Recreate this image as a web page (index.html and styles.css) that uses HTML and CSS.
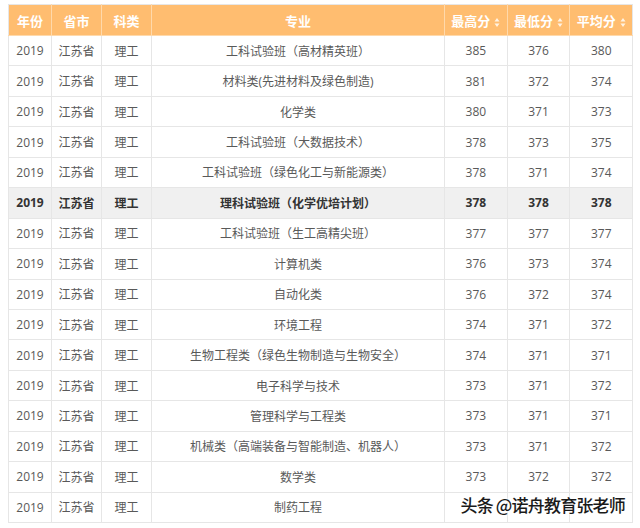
FILE: index.html
```html
<!DOCTYPE html>
<html lang="zh-CN">
<head>
<meta charset="utf-8">
<title>分数表</title>
<link rel="stylesheet" href="styles.css">
</head>
<body>
<div class="wrap">
<table class="score">
  <colgroup>
    <col class="c-year"><col class="c-prov"><col class="c-type"><col class="c-major"><col class="c-num"><col class="c-num"><col class="c-num">
  </colgroup>
  <thead>
    <tr>
      <th>年份</th><th>省市</th><th>科类</th><th>专业</th>
      <th>最高分<svg class="sort" viewBox="0 0 6 9" width="6" height="9"><path d="M3 0L5.5 3.5H0.5Z M3 9L5.5 5.5H0.5Z"/></svg></th>
      <th>最低分<svg class="sort" viewBox="0 0 6 9" width="6" height="9"><path d="M3 0L5.5 3.5H0.5Z M3 9L5.5 5.5H0.5Z"/></svg></th>
      <th>平均分<svg class="sort" viewBox="0 0 6 9" width="6" height="9"><path d="M3 0L5.5 3.5H0.5Z M3 9L5.5 5.5H0.5Z"/></svg></th>
    </tr>
  </thead>
  <tbody>
    <tr><td>2019</td><td>江苏省</td><td>理工</td><td>工科试验班（高材精英班）</td><td>385</td><td>376</td><td>380</td></tr>
    <tr><td>2019</td><td>江苏省</td><td>理工</td><td>材料类(先进材料及绿色制造)</td><td>381</td><td>372</td><td>374</td></tr>
    <tr><td>2019</td><td>江苏省</td><td>理工</td><td>化学类</td><td>380</td><td>371</td><td>373</td></tr>
    <tr><td>2019</td><td>江苏省</td><td>理工</td><td>工科试验班（大数据技术）</td><td>378</td><td>373</td><td>375</td></tr>
    <tr><td>2019</td><td>江苏省</td><td>理工</td><td>工科试验班（绿色化工与新能源类）</td><td>378</td><td>371</td><td>374</td></tr>
    <tr class="hl"><td>2019</td><td>江苏省</td><td>理工</td><td>理科试验班（化学优培计划）</td><td>378</td><td>378</td><td>378</td></tr>
    <tr><td>2019</td><td>江苏省</td><td>理工</td><td>工科试验班（生工高精尖班）</td><td>377</td><td>377</td><td>377</td></tr>
    <tr><td>2019</td><td>江苏省</td><td>理工</td><td>计算机类</td><td>376</td><td>373</td><td>374</td></tr>
    <tr><td>2019</td><td>江苏省</td><td>理工</td><td>自动化类</td><td>376</td><td>372</td><td>374</td></tr>
    <tr><td>2019</td><td>江苏省</td><td>理工</td><td>环境工程</td><td>374</td><td>371</td><td>372</td></tr>
    <tr><td>2019</td><td>江苏省</td><td>理工</td><td>生物工程类（绿色生物制造与生物安全）</td><td>374</td><td>371</td><td>371</td></tr>
    <tr><td>2019</td><td>江苏省</td><td>理工</td><td>电子科学与技术</td><td>373</td><td>371</td><td>372</td></tr>
    <tr><td>2019</td><td>江苏省</td><td>理工</td><td>管理科学与工程类</td><td>373</td><td>371</td><td>371</td></tr>
    <tr><td>2019</td><td>江苏省</td><td>理工</td><td>机械类（高端装备与智能制造、机器人）</td><td>373</td><td>371</td><td>372</td></tr>
    <tr><td>2019</td><td>江苏省</td><td>理工</td><td>数学类</td><td>373</td><td>372</td><td>372</td></tr>
    <tr><td>2019</td><td>江苏省</td><td>理工</td><td>制药工程</td><td></td><td></td><td></td></tr>
  </tbody>
</table>
<div class="mark">头条 @诺舟教育张老师</div>
</div>
</body>
</html>
```

FILE: styles.css
```css
html, body {
  margin: 0;
  padding: 0;
  background: #ffffff;
}
body {
  padding: 4px 8px 0 8px;
  font-family: "Open Sans", "Noto Sans CJK SC", sans-serif;
}
.wrap {
  position: relative;
  width: 624px;
}
.score {
  width: 624px;
  border-collapse: collapse;
  table-layout: fixed;
  font-size: 12px;
  color: #595959;
}
.c-year { width: 43px; }
.c-prov { width: 50px; }
.c-type { width: 50px; }
.c-major { width: 293px; }
.c-num { width: 62.7px; }
.score th, .score td {
  border: 1px solid #e6e6e6;
  text-align: center;
  padding: 0;
  white-space: nowrap;
}
.score thead tr {
  height: 31px;
}
.score th {
  background: #ffbd70;
  color: #ffffff;
  font-weight: bold;
  font-size: 13px;
  border-color: #ffd9ab;
  border-top-color: #e6e6e6;
}
.score th:first-child { border-left-color: #e6e6e6; }
.score th:last-child { border-right-color: #e6e6e6; }
.score tbody tr {
  height: 30.44px;
}
.score tbody tr.hl td {
  background: #f0f0f0;
  font-weight: bold;
  color: #333333;
}
.sort {
  fill: #fff3e3;
  margin-left: 4px;
  vertical-align: -1px;
}
.mark {
  position: absolute;
  right: 7px;
  bottom: 8px;
  font-family: "Noto Sans CJK SC", sans-serif;
  font-size: 17px;
  line-height: 20px;
  font-weight: 500;
  color: #1a1a1a;
  text-shadow: 0 0 2px #ffffff, 0 0 2px #ffffff, 0 0 3px #ffffff;
  letter-spacing: -0.8px;
}
```
